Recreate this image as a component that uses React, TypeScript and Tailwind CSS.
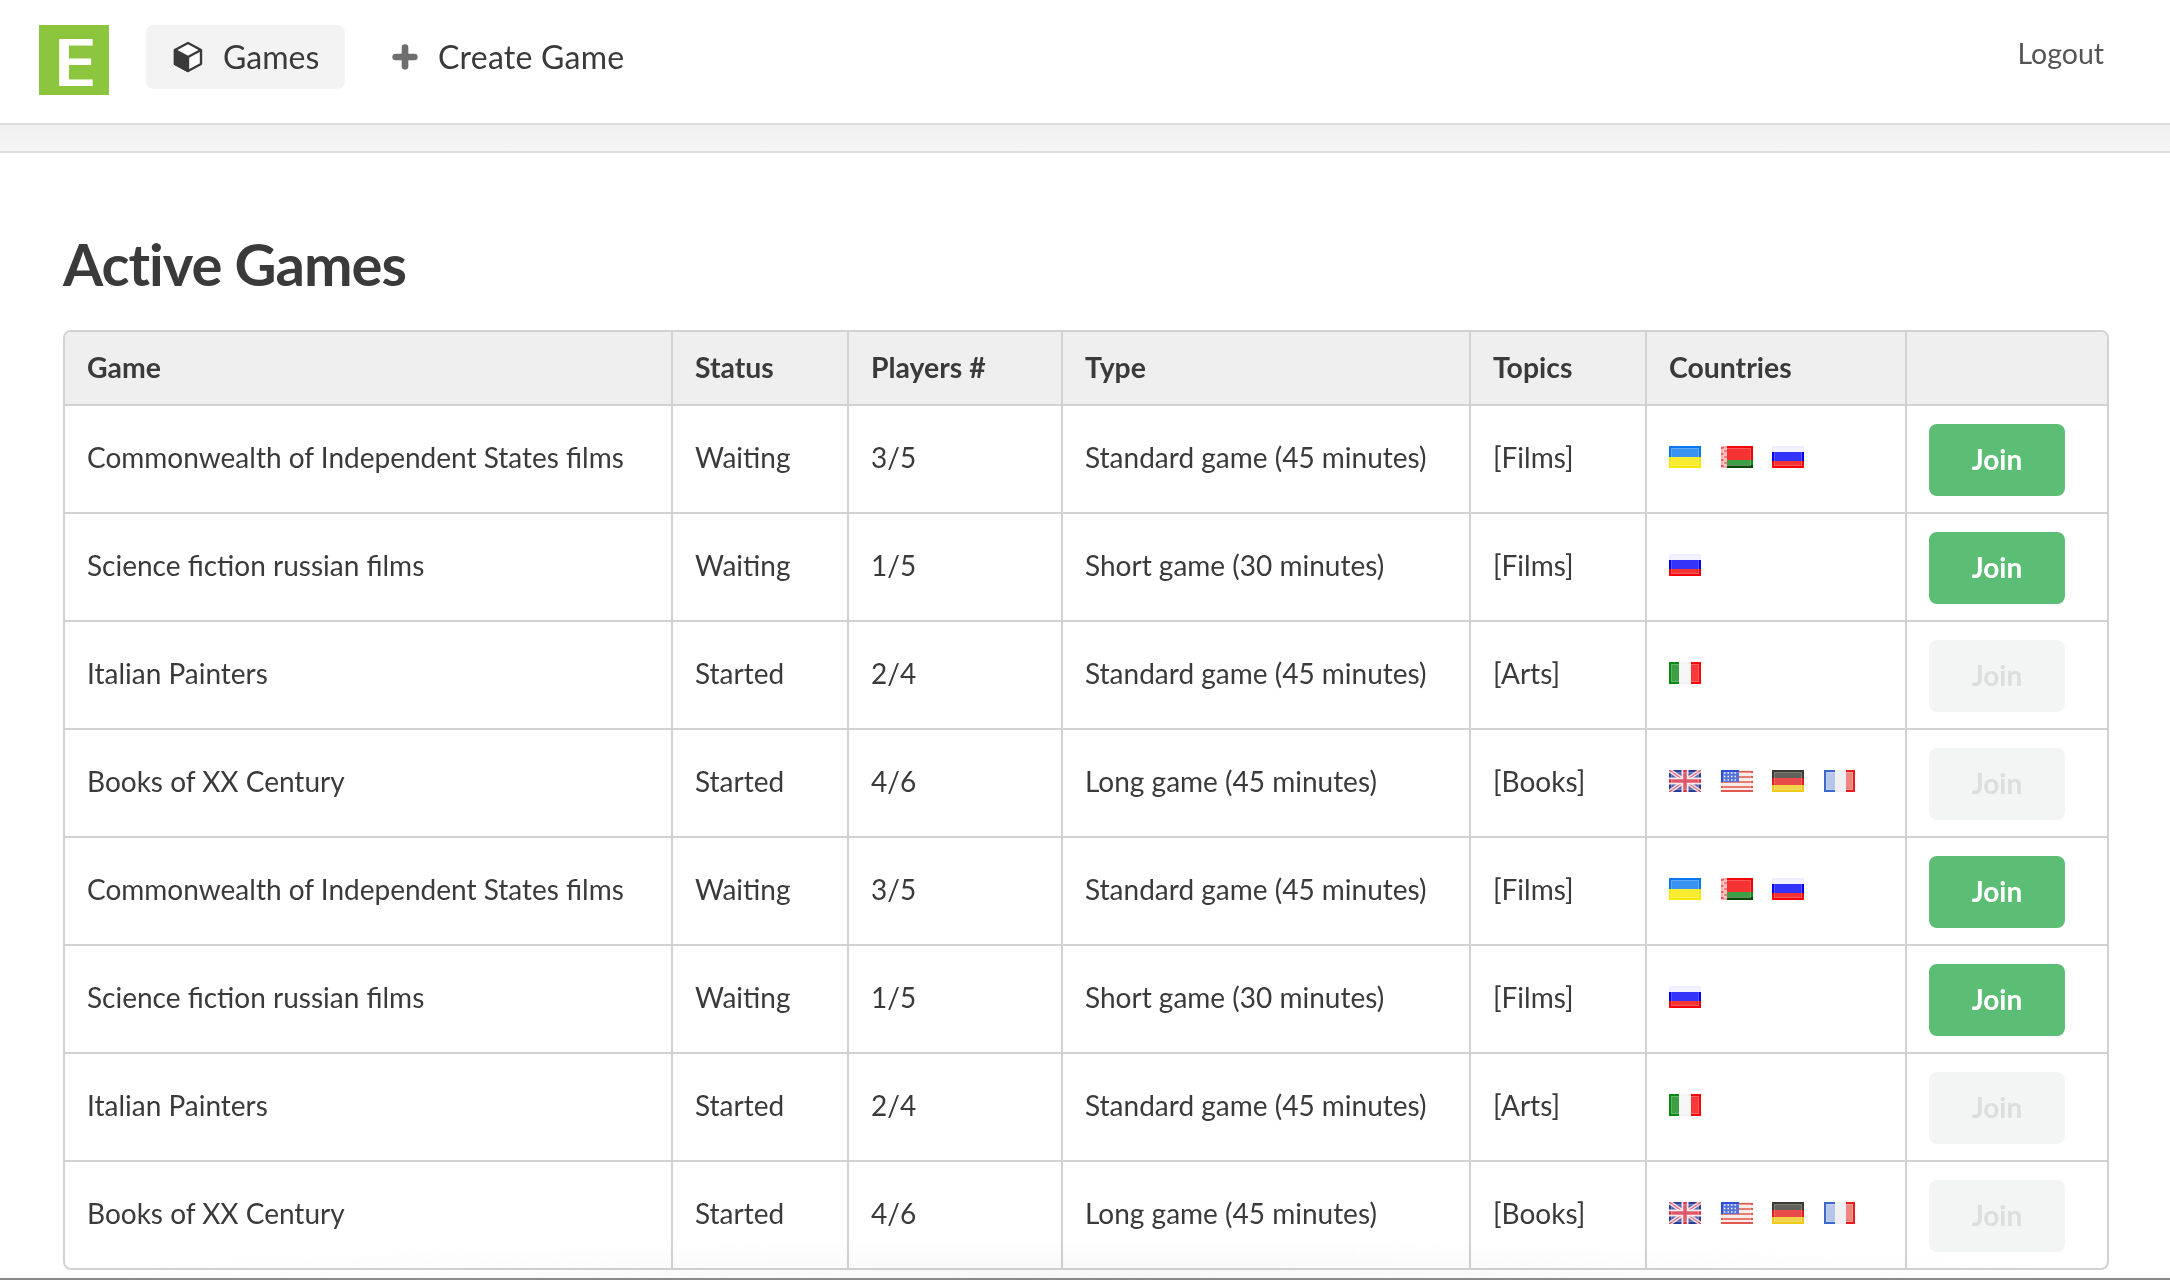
import { Plus } from "lucide-react";

type Game = {
  name: string;
  status: string;
  players: string;
  type: string;
  topics: string;
  flags: string[];
};

const games: Game[] = [
  { name: "Commonwealth of Independent States films", status: "Waiting", players: "3/5", type: "Standard game (45 minutes)", topics: "[Films]", flags: ["ua", "by", "ru"] },
  { name: "Science fiction russian films", status: "Waiting", players: "1/5", type: "Short game (30 minutes)", topics: "[Films]", flags: ["ru"] },
  { name: "Italian Painters", status: "Started", players: "2/4", type: "Standard game (45 minutes)", topics: "[Arts]", flags: ["it"] },
  { name: "Books of XX Century", status: "Started", players: "4/6", type: "Long game (45 minutes)", topics: "[Books]", flags: ["gb", "us", "de", "fr"] },
  { name: "Commonwealth of Independent States films", status: "Waiting", players: "3/5", type: "Standard game (45 minutes)", topics: "[Films]", flags: ["ua", "by", "ru"] },
  { name: "Science fiction russian films", status: "Waiting", players: "1/5", type: "Short game (30 minutes)", topics: "[Films]", flags: ["ru"] },
  { name: "Italian Painters", status: "Started", players: "2/4", type: "Standard game (45 minutes)", topics: "[Arts]", flags: ["it"] },
  { name: "Books of XX Century", status: "Started", players: "4/6", type: "Long game (45 minutes)", topics: "[Books]", flags: ["gb", "us", "de", "fr"] },
];

const Flag = ({ code }: { code: string }) => {
  let art = null;
  if (code === "ua") {
    art = (
      <>
        <rect width="32" height="11" fill="#0a78ee" />
        <rect y="11" width="32" height="11" fill="#f8e800" />
      </>
    );
  } else if (code === "by") {
    art = (
      <>
        <rect width="32" height="14" fill="#f40000" />
        <rect y="14" width="32" height="8" fill="#0a8a14" />
        <rect y="19" width="32" height="3" fill="#0a4a0a" />
        <rect width="6" height="22" fill="#ffb0b0" />
        <path d="M0 2H3M3 5H6M0 8H3M3 11H6M0 14H3M3 17H6M0 20H3" stroke="#f04040" strokeWidth="1.5" />
      </>
    );
  } else if (code === "ru") {
    art = (
      <>
        <rect width="32" height="7" fill="#eeeeff" />
        <rect y="6" width="32" height="9" fill="#0000f8" />
        <rect y="15" width="32" height="7" fill="#f40000" />
      </>
    );
  } else if (code === "it") {
    art = (
      <>
        <rect width="10" height="22" fill="#0a8a14" />
        <rect x="10" width="12" height="22" fill="#f4f4f4" />
        <rect x="22" width="10" height="22" fill="#f80808" />
      </>
    );
  } else if (code === "gb") {
    art = (
      <>
        <rect width="32" height="22" fill="#2a3f9a" />
        <path d="M0 0L32 22M32 0L0 22" stroke="#f0dce0" strokeWidth="4" />
        <path d="M0 0L32 22M32 0L0 22" stroke="#d8485a" strokeWidth="1.2" />
        <path d="M16 0V22M0 11H32" stroke="#f4e8e8" strokeWidth="7" />
        <path d="M16 0V22M0 11H32" stroke="#d83048" strokeWidth="3.5" />
      </>
    );
  } else if (code === "us") {
    art = (
      <>
        <rect width="32" height="22" fill="#f6e8e4" />
        <path d="M0 2H32M0 7H32M0 12H32M0 17H32M0 21H32" stroke="#e05a50" strokeWidth="2" />
        <rect width="18" height="12" fill="#2c50d0" />
        <path d="M3 3H16M3 6.5H16M3 10H16" stroke="#e4e8ff" strokeWidth="1.4" strokeDasharray="1.5 2" />
      </>
    );
  } else if (code === "de") {
    art = (
      <>
        <rect width="32" height="8" fill="#3a3a30" />
        <rect y="8" width="32" height="7" fill="#e41c1c" />
        <rect y="15" width="32" height="7" fill="#f0c818" />
      </>
    );
  } else if (code === "fr") {
    art = (
      <>
        <rect width="11" height="22" fill="#3a68cc" />
        <rect x="2" y="2" width="9" height="18" fill="#a4b8e4" />
        <rect x="11" width="11" height="22" fill="#ececf2" />
        <rect x="22" width="9" height="22" fill="#f01818" />
        <rect x="22" y="2" width="7" height="18" fill="#e86a60" />
      </>
    );
  }
  const soft = code === "gb" || code === "us" || code === "de" || code === "fr";
  return (
    <svg width="32" height="22" viewBox="0 0 32 22" className={soft ? "block shrink-0 blur-[0.5px]" : "block shrink-0"}>
      {art}
      <rect x="2" y="2" width={code === "fr" ? 27 : 28} height="18" fill="#fff" fillOpacity="0.2" />
      <rect x="2.5" y="2.5" width={code === "fr" ? 26 : 27} height="17" fill="none" stroke="#fff" strokeOpacity="0.2" />
    </svg>
  );
};

const CubeIcon = () => (
  <svg width="32" height="32" viewBox="0 0 32 32" className="block">
    <path d="M16 2L29 9V23L16 30L3 23V9Z" fill="#fff" stroke="#3a3a3a" strokeWidth="2.4" strokeLinejoin="round" />
    <path d="M3 9L16 16V30L3 23Z" fill="#3a3a3a" stroke="#3a3a3a" strokeWidth="2.4" strokeLinejoin="round" />
    <path d="M16 16L29 9" stroke="#3a3a3a" strokeWidth="2.4" />
  </svg>
);

const App = () => {
  return (
    <div className="relative h-[1280px] overflow-hidden bg-white font-['Lato','Open_Sans',sans-serif] text-[#3a3a3a] flex flex-col">
      <header className="h-[123px] shrink-0 bg-white flex items-start pl-[39px] pr-[66px] pt-[25px]">
        <div className="w-[70px] h-[70px] bg-[#8cc63f] flex items-center justify-center">
          <span className="inline-block scale-x-125 text-white text-[66px] font-semibold leading-none font-['Open_Sans',sans-serif]">E</span>
        </div>
        <a className="ml-[37px] h-[64px] w-[199px] bg-[#f3f3f3] rounded-lg flex items-center pl-[26px] text-[32px]">
          <CubeIcon />
          <span className="ml-[19px]">Games</span>
        </a>
        <a className="ml-[44px] h-[64px] flex items-center text-[32px]">
          <Plus size={32} strokeWidth={5} color="#6e6e6e" />
          <span className="ml-[17px] tracking-[0.25px]">Create Game</span>
        </a>
        <a className="ml-auto text-[28.5px] leading-[56px] text-[#555555]">Logout</a>
      </header>
      <div className="h-[30px] shrink-0 bg-gradient-to-b from-[#efefef] to-[#f6f6f6] border-y-2 border-[#dddddd]" />
      <main className="pl-[63px] flex-1 min-h-0">
        <h1 className="mt-[75px] text-[58px] leading-[72px] font-bold tracking-[-1px] text-[#3a3a3a]">Active Games</h1>
        <div className="mt-[30px] w-[2046px] border-2 border-[#d2d2d2] rounded-lg overflow-hidden">
          <table className="w-full border-collapse table-fixed text-[28px]">
            <colgroup>
              <col className="w-[607px]" />
              <col className="w-[176px]" />
              <col className="w-[214px]" />
              <col className="w-[408px]" />
              <col className="w-[176px]" />
              <col className="w-[260px]" />
              <col />
            </colgroup>
            <thead>
              <tr className="h-[73px] bg-[#efefef]">
                {["Game", "Status", "Players #", "Type", "Topics", "Countries", ""].map((h, i) => (
                  <th key={i} className="border-l-2 first:border-l-0 border-b-2 border-[#d2d2d2] text-left font-bold pl-[22px] pb-[2px] text-[28.4px]">
                    {h}
                  </th>
                ))}
              </tr>
            </thead>
            <tbody className="[&>tr:last-child]:h-[107px] [&>tr:last-child>td]:border-b-0">
              {games.map((g, i) => (
                <tr key={i} className="h-[108px]">
                  <td className="pl-[22px] pb-[4px] whitespace-nowrap border-b-2 border-[#d2d2d2]">{g.name}</td>
                  <td className="pl-[22px] pb-[4px] border-l-2 border-b-2 border-[#d2d2d2]">{g.status}</td>
                  <td className="pl-[22px] pb-[4px] border-l-2 border-b-2 border-[#d2d2d2]">{g.players}</td>
                  <td className="pl-[22px] pb-[4px] whitespace-nowrap border-l-2 border-b-2 border-[#d2d2d2]">{g.type}</td>
                  <td className="pl-[22px] pb-[4px] border-l-2 border-b-2 border-[#d2d2d2]">{g.topics}</td>
                  <td className="pl-[22px] pb-[4px] border-l-2 border-b-2 border-[#d2d2d2]">
                    <div className="flex gap-[19.5px]">
                      {g.flags.map((f, j) => (
                        <Flag key={j} code={f} />
                      ))}
                    </div>
                  </td>
                  <td className="pl-[22px] pt-[2px] border-l-2 border-b-2 border-[#d2d2d2]">
                    {g.status === "Waiting" ? (
                      <button type="button" className="block w-[136px] h-[72px] pb-[2px] rounded-lg bg-[#5cbd75] text-white font-bold text-[28px]">
                        Join
                      </button>
                    ) : (
                      <button type="button" className="block w-[136px] h-[72px] pb-[2px] rounded-lg bg-[#f3f4f4] text-[#dddddd] font-bold text-[28px]">
                        Join
                      </button>
                    )}
                  </td>
                </tr>
              ))}
            </tbody>
          </table>
        </div>
      </main>
      <div className="pointer-events-none absolute left-0 right-0 bottom-[2px] h-[40px] mix-blend-multiply bg-[radial-gradient(ellipse_at_bottom,#f7f7f7,transparent_70%)]" />
      <div className="absolute left-0 right-0 bottom-0 h-[2px] bg-[#8a8a8a]" />
    </div>
  );
};

export default App;
